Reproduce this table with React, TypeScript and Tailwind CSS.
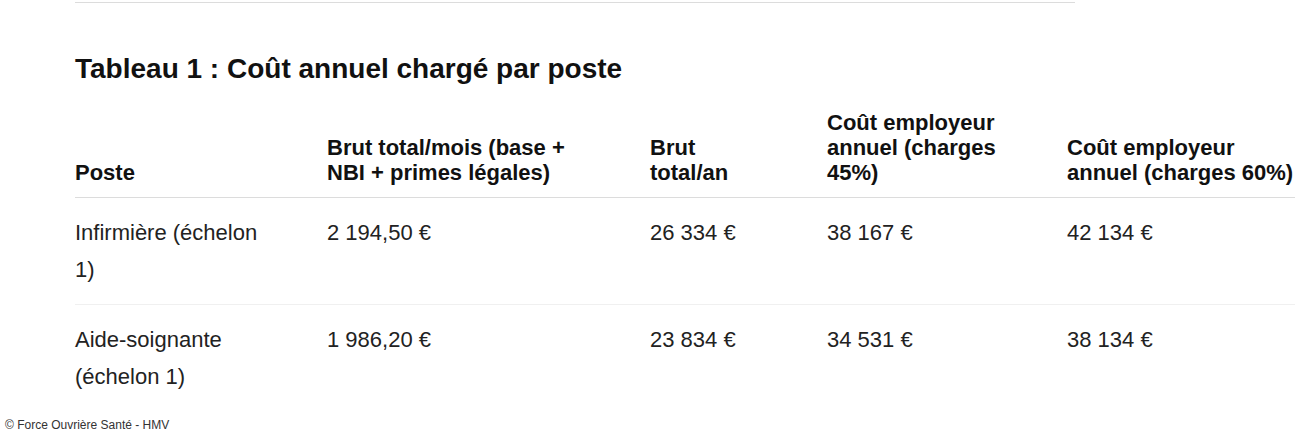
import React from "react";

type Row = {
  poste: string;
  brutMois: string;
  brutAn: string;
  cout45: string;
  cout60: string;
};

const ROWS: Row[] = [
  { poste: "Infirmière (échelon 1)", brutMois: "2 194,50 €", brutAn: "26 334 €", cout45: "38 167 €", cout60: "42 134 €" },
  { poste: "Aide-soignante (échelon 1)", brutMois: "1 986,20 €", brutAn: "23 834 €", cout45: "34 531 €", cout60: "38 134 €" },
];

// widths / right padding per column, tuned so the wraps land like the source
const COLS = [
  { w: "w-[252px]", pr: "pr-[57px]" },
  { w: "w-[323px]", pr: "pr-[68px]" },
  { w: "w-[177px]", pr: "pr-[67px]" },
  { w: "w-[240px]", pr: "pr-[50px]" },
  { w: "w-[228px]", pr: "pr-0" },
];

const HEADERS = [
  "Poste",
  "Brut total/mois (base + NBI + primes légales)",
  "Brut total/an",
  "Coût employeur annuel (charges 45%)",
  "Coût employeur annuel (charges 60%)",
];

export default function App() {
  return (
    <div className="w-[1301px] h-[436px] overflow-hidden bg-white text-[#111] font-['Liberation_Sans',Arial,sans-serif]">
      <div className="pl-[75px] pt-[2px]">
        <div className="w-[1000px] h-px bg-[#dcdcdc]" />

        <h2 className="mt-[49px] text-[28px] leading-[34px] font-bold text-[#111]">
          Tableau 1 : Coût annuel chargé par poste
        </h2>

        <table className="mt-[24px] table-fixed border-collapse w-[1220px]">
          <colgroup>
            {COLS.map((c, i) => (
              <col key={i} className={c.w} />
            ))}
          </colgroup>
          <thead>
            <tr className="border-b border-[#dcdcdc]">
              {HEADERS.map((h, i) => (
                <th
                  key={i}
                  className={`${COLS[i].pr} pl-0 pb-[12px] pt-0 align-bottom text-left text-[22px] leading-[25px] font-bold text-[#111]`}
                >
                  {h}
                </th>
              ))}
            </tr>
          </thead>
          <tbody>
            {ROWS.map((r, i) => (
              <tr key={i} className={i < ROWS.length - 1 ? "border-b border-[#f0f0f0]" : ""}>
                {[r.poste, r.brutMois, r.brutAn, r.cout45, r.cout60].map((v, j) => (
                  <td
                    key={j}
                    className={`${COLS[j].pr} pl-0 py-4 align-top text-[22px] leading-[37px] text-[#222]`}
                  >
                    {v}
                  </td>
                ))}
              </tr>
            ))}
          </tbody>
        </table>
      </div>

      <p className="mt-[7px] pl-[5px] text-[12px] leading-[14px] text-[#333]">
        © Force Ouvrière Santé - HMV
      </p>
    </div>
  );
}
